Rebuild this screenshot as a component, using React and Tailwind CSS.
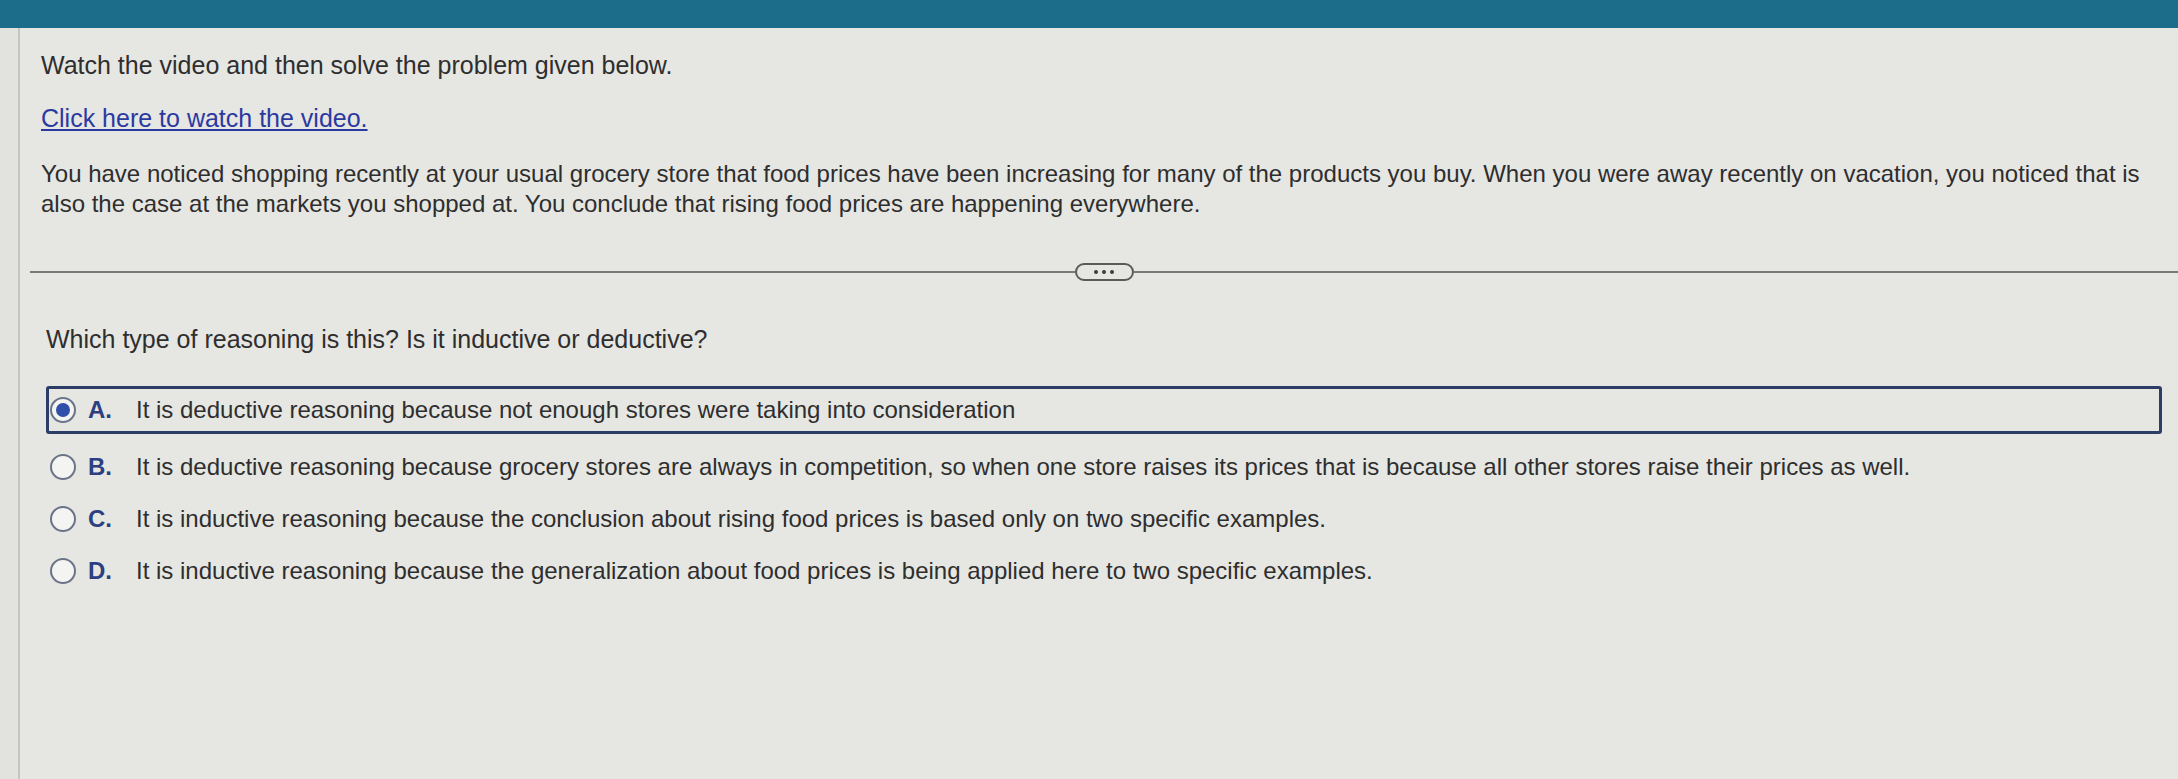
import React from "react";

const OPTIONS = [
  {
    key: "A",
    text: "It is deductive reasoning because not enough stores were taking into consideration",
  },
  {
    key: "B",
    text: "It is deductive reasoning because grocery stores are always in competition, so when one store raises its prices that is because all other stores raise their prices as well.",
  },
  {
    key: "C",
    text: "It is inductive reasoning because the conclusion about rising food prices is based only on two specific examples.",
  },
  {
    key: "D",
    text: "It is inductive reasoning because the generalization about food prices is being applied here to two specific examples.",
  },
];

const Radio = ({ checked }) => (
  <div className="w-[26px] h-[26px] rounded-full border-[2.5px] border-[#6b7388] bg-[#f4f4f2] flex items-center justify-center shrink-0">
    {checked && <div className="w-[14px] h-[14px] rounded-full bg-[#2f4fa8]" />}
  </div>
);

export default function App() {
  return (
    <div className="w-[2178px] h-[779px] bg-[#e6e6e3] font-['Liberation_Sans',Arial,sans-serif] text-[#2e2e2e] flex flex-col overflow-hidden">
      <div className="h-[28px] bg-[#1c6d8a] shrink-0" />
      <div className="flex flex-1">
        <div className="w-[20px] border-r-[2px] border-[#c4c4c2] bg-[#e2e2df] shrink-0" />
        <div className="flex-1 flex flex-col">
          <div className="pl-[21px] pr-[16px] pt-[22px] leading-[30px]">
            <p className="text-[25px]">Watch the video and then solve the problem given below.</p>
            <p className="mt-[23px] text-[25px]">
              <a href="#" className="text-[#2b3aa0] underline">
                Click here to watch the video.
              </a>
            </p>
            <p className="mt-[26px] text-[24px]">
              You have noticed shopping recently at your usual grocery store that food prices have been increasing for many of the products you buy. When you were away recently on vacation, you noticed that is
              <br />
              also the case at the markets you shopped at. You conclude that rising food prices are happening everywhere.
            </p>
          </div>
          <div className="flex items-center mt-[44px] pl-[10px]">
            <div className="flex-1 h-[2px] bg-[#7a7a78]" />
            <div className="w-[59px] h-[18px] rounded-full border-[2px] border-[#5a5a58] flex items-center justify-center gap-[4px]">
              <span className="w-[4px] h-[4px] rounded-full bg-[#3a3a3a]" />
              <span className="w-[4px] h-[4px] rounded-full bg-[#3a3a3a]" />
              <span className="w-[4px] h-[4px] rounded-full bg-[#3a3a3a]" />
            </div>
            <div className="flex-1 h-[2px] bg-[#7a7a78]" />
          </div>
          <p className="pl-[26px] mt-[43px] text-[25px] leading-[30px]">
            Which type of reasoning is this? Is it inductive or deductive?
          </p>
          <div className="mt-[32px] pl-[26px] pr-[16px] flex flex-col">
            {OPTIONS.map((o, i) => (
              <div
                key={o.key}
                className={
                  i === 0
                    ? "flex items-center h-[48px] pl-[1px] border-[3px] border-[#2c3e68] rounded-[3px]"
                    : i === 1
                    ? "flex items-center h-[52px] mt-[7px] pl-[1px] border-[3px] border-transparent"
                    : "flex items-center h-[52px] pl-[1px] border-[3px] border-transparent"
                }
              >
                <Radio checked={i === 0} />
                <span className="ml-[12px] w-[48px] text-[24px] font-bold text-[#2c3f80]">
                  {o.key}.
                </span>
                <span className="text-[24px]">{o.text}</span>
              </div>
            ))}
          </div>
        </div>
      </div>
    </div>
  );
}
